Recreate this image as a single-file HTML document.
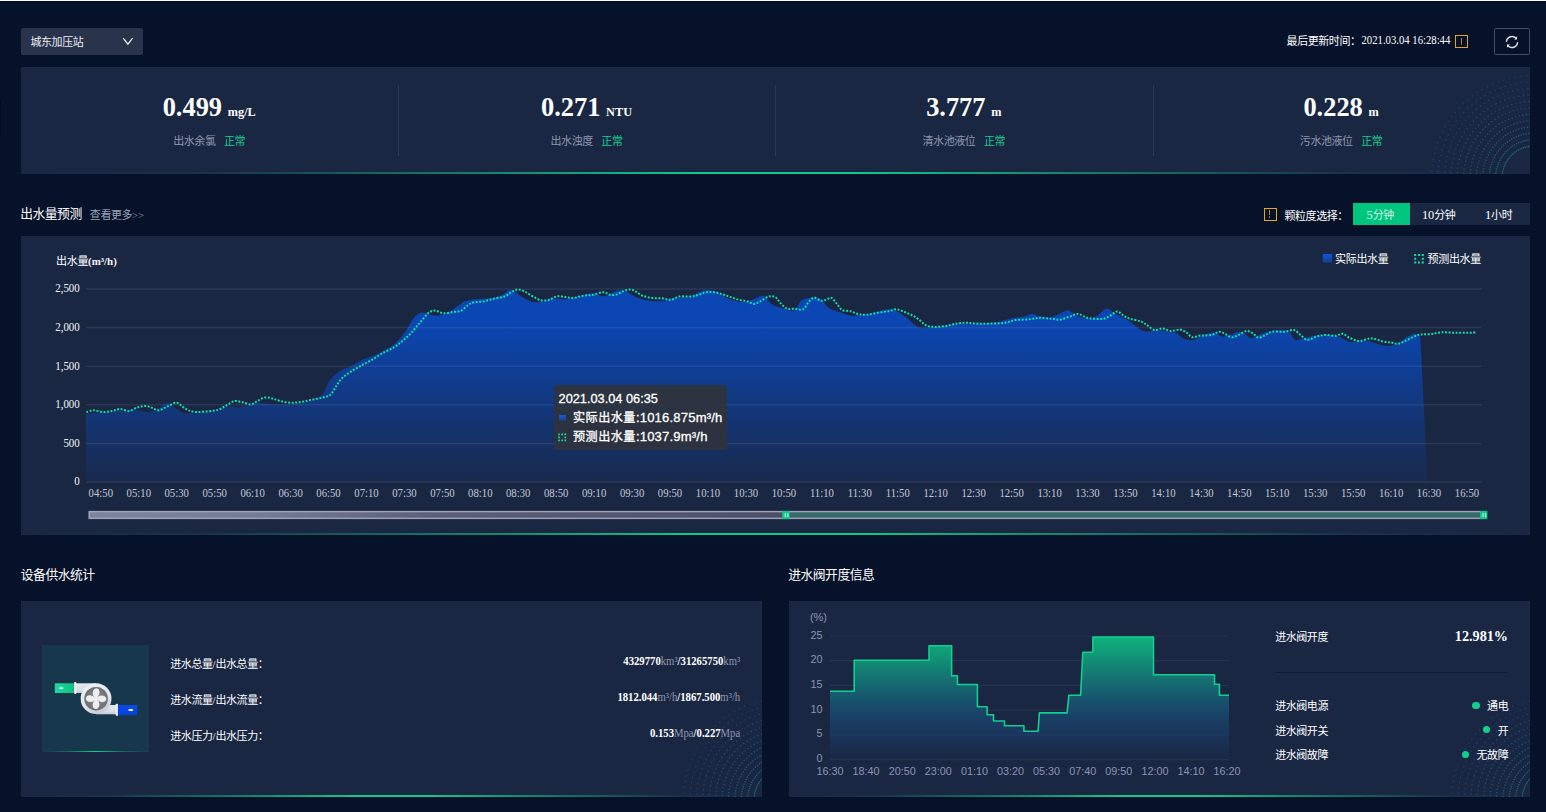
<!DOCTYPE html>
<html lang="zh"><head><meta charset="utf-8"><title>城东加压站</title>
<style>
*{box-sizing:border-box;margin:0;padding:0}
html,body{width:1546px;height:812px;overflow:hidden;background:#06112a}
body{position:relative;font-family:"Liberation Serif","Noto Sans CJK SC",serif;color:#fff;font-size:10.6px;font-weight:400}
.abs{position:absolute}
.ty{display:inline-block;transform:scaleY(1.1);transform-origin:50% 72%}
.c{font-family:"Liberation Serif","Noto Sans CJK SC",serif;font-size:11px;letter-spacing:-0.44px}
.t{position:absolute;white-space:nowrap;line-height:16px;height:16px}
.panel{position:absolute;background:#1a2743;overflow:hidden}
.panel::after{content:"";position:absolute;left:0;right:0;bottom:0;height:2px;background:linear-gradient(90deg,rgba(15,203,139,0) 0%,rgba(15,203,139,.07) 12%,rgba(15,203,139,.55) 30%,#0fcb8b 45%,#0fcb8b 55%,rgba(15,203,139,.55) 70%,rgba(15,203,139,.07) 88%,rgba(15,203,139,0) 100%)}
.deco{position:absolute;right:0;bottom:0}
.chart{position:absolute;left:0;top:0}
.chart text{font-family:"Liberation Serif","Noto Sans CJK SC",serif}
.ax{font-size:10.95px;fill:#f2f4f8}
.axx{font-size:10.7px;fill:#c3c8d4}
.lg{font-family:"Liberation Serif","Noto Sans CJK SC",serif !important;font-size:11px;letter-spacing:-0.3px;fill:#fff}
.va{font-family:"Liberation Sans","Noto Sans CJK SC",sans-serif !important;font-size:10.8px;fill:#8c94b3}
.sel{left:21px;top:28px;width:122px;height:26.5px;background:#29334c;border-radius:2px}
.warn{position:absolute;width:12.8px;height:12.8px;border:1.4px solid #e6a715}
.warn::before{content:"";position:absolute;left:4.3px;top:1.6px;width:1.2px;height:5px;background:#c9851f}
.warn::after{content:"";position:absolute;left:4.3px;top:7.2px;width:1.2px;height:1.6px;background:#9a7a2a}
.refresh{left:1494px;top:28px;width:36px;height:26.5px;border:1px solid #414b65;border-radius:1.5px}
.stat{position:absolute;top:0;height:107px;width:377px;text-align:center}
.stat .num{position:absolute;left:0;right:0;top:23px;font-weight:700;font-size:26.4px;line-height:34px;color:#fff;white-space:nowrap}
.stat .num small{font-size:12.3px;font-weight:700;margin-left:-0.9px}
.stat .lab{position:absolute;left:0;right:0;top:65.8px;line-height:16px;color:#9098ad;white-space:nowrap}
.stat .lab b{color:#12cf8e;font-weight:400;margin-left:8.6px}
.vsep{position:absolute;top:18px;width:1px;height:71px;background:#2d3851}
.h{font-family:"Liberation Serif","Noto Sans CJK SC",serif;font-size:12.8px;letter-spacing:-0.5px;color:#fff}
.more{font-size:11px;letter-spacing:-0.44px;color:#9aa2b6}
.seg{position:absolute;top:203.4px;height:21.2px;line-height:25.2px;overflow:hidden;text-align:center;background:#1a2743;color:#fff;white-space:nowrap;padding-right:3px}
.tip{left:554px;top:385px;width:173.3px;height:64.6px;background:rgba(46,51,60,.93);border-radius:3px;-webkit-text-stroke:0.3px #fff;font-family:"Liberation Sans","Noto Sans CJK SC",sans-serif;font-size:13.1px;color:#fff;white-space:nowrap}
.tip .ln{position:absolute;left:4.6px;height:18px;line-height:18px}
.tip .zh{font-size:12.1px;letter-spacing:0.48px}
.val{position:absolute;right:21.8px;line-height:16px;height:16px;white-space:nowrap;font-weight:700;font-size:10.7px;transform:scaleY(1.1);transform-origin:50% 72%}
.val i{font-style:normal;font-weight:400;color:#8e95ad}
.dotg{position:absolute;width:7.2px;height:7.2px;border-radius:50%;background:#12cf8e}
</style></head><body>
<div class="abs" style="left:0;top:0;width:1546px;height:1px;background:#fdfdfe"></div><div class="abs" style="left:0;top:1px;width:1546px;height:1px;background:#010520"></div><div class="abs" style="left:0;top:101px;width:1px;height:36px;background:#020a1d"></div>
<div class="abs sel"></div>
<div class="t c" style="left:30.5px;top:34.2px;color:#e9ecf3">城东加压站</div>
<svg class="abs" style="left:122px;top:36.9px" width="12" height="9" viewBox="0 0 12 9"><path d="M1.2,1.1 L5.9,7.2 L10.6,1.1" fill="none" stroke="#e9ecf3" stroke-width="1.25"/></svg>
<div class="t " style="left:1286.6px;top:33.2px;"><span class="c">最后更新时间：</span><span class="ty" style="font-size:10.7px;margin-left:1px;position:relative;top:-0.9px">2021.03.04 16:28:44</span></div>
<div class="warn" style="left:1455.4px;top:35px"></div>
<div class="abs refresh"><svg class="abs" style="left:8.8px;top:5.1px" width="16" height="16" viewBox="0 0 16 16"><g fill="none" stroke="#d9dce3" stroke-width="1.5"><path d="M2.50,7.81 A5.5,5.5 0 0 1 12.09,4.32"/><path d="M13.50,8.19 A5.5,5.5 0 0 1 3.91,11.68"/></g><path d="M12.94,5.59 L13.09,2.35 L10.28,5.47Z" fill="#f4f5f8"/><path d="M3.06,10.41 L2.91,13.65 L5.72,10.53Z" fill="#f4f5f8"/></svg></div>
<div class="panel" style="left:21px;top:67px;width:1509px;height:107px">
<svg class="deco" width="112" height="112" viewBox="0 0 112 112"><circle cx="116" cy="116" r="32.0" fill="none" stroke="rgb(31,150,150)" stroke-opacity="0.64" stroke-width="1.2" stroke-dasharray="1.2 0.63"/>
<circle cx="116" cy="116" r="38.4" fill="none" stroke="rgb(30,143,151)" stroke-opacity="0.63" stroke-width="1.2" stroke-dasharray="1.2 0.99"/>
<circle cx="116" cy="116" r="44.8" fill="none" stroke="rgb(30,137,152)" stroke-opacity="0.63" stroke-width="1.2" stroke-dasharray="1.2 1.36"/>
<circle cx="116" cy="116" r="51.2" fill="none" stroke="rgb(30,130,154)" stroke-opacity="0.62" stroke-width="1.2" stroke-dasharray="1.2 1.72"/>
<circle cx="116" cy="116" r="57.6" fill="none" stroke="rgb(30,124,155)" stroke-opacity="0.62" stroke-width="1.2" stroke-dasharray="1.2 2.09"/>
<circle cx="116" cy="116" r="64.0" fill="none" stroke="rgb(30,118,156)" stroke-opacity="0.61" stroke-width="1.2" stroke-dasharray="1.2 2.46"/>
<circle cx="116" cy="116" r="70.4" fill="none" stroke="rgb(30,111,158)" stroke-opacity="0.61" stroke-width="1.2" stroke-dasharray="1.2 2.82"/>
<circle cx="116" cy="116" r="76.8" fill="none" stroke="rgb(30,105,159)" stroke-opacity="0.60" stroke-width="1.2" stroke-dasharray="1.2 3.19"/>
<circle cx="116" cy="116" r="83.2" fill="none" stroke="rgb(30,99,160)" stroke-opacity="0.60" stroke-width="1.2" stroke-dasharray="1.2 3.55"/>
<circle cx="116" cy="116" r="89.6" fill="none" stroke="rgb(30,92,162)" stroke-opacity="0.59" stroke-width="1.2" stroke-dasharray="1.2 3.92"/>
<circle cx="116" cy="116" r="96.0" fill="none" stroke="rgb(30,86,163)" stroke-opacity="0.59" stroke-width="1.2" stroke-dasharray="1.2 4.28"/>
<circle cx="116" cy="116" r="102.4" fill="none" stroke="rgb(30,80,165)" stroke-opacity="0.58" stroke-width="1.2" stroke-dasharray="1.2 4.65"/></svg>
<div class="stat" style="left:-0.3px"><div class="num">0.499 <small>mg/L</small></div><div class="lab c">出水余氯<b>正常</b></div></div>
<div class="stat" style="left:377.0px"><div class="num">0.271 <small>NTU</small></div><div class="lab c">出水浊度<b>正常</b></div></div>
<div class="vsep" style="left:376.9px"></div>
<div class="stat" style="left:754.3px"><div class="num">3.777 <small>m</small></div><div class="lab c">清水池液位<b>正常</b></div></div>
<div class="vsep" style="left:754.2px"></div>
<div class="stat" style="left:1131.6px"><div class="num">0.228 <small>m</small></div><div class="lab c">污水池液位<b>正常</b></div></div>
<div class="vsep" style="left:1131.5px"></div>
</div>
<div class="t h" style="left:20.2px;top:206.3px;">出水量预测<span class="more" style="margin-left:8.2px;position:relative;top:0.8px">查看更多</span><span style="font-family:'Liberation Serif',serif;font-size:10.6px;letter-spacing:0;color:#8e96ac;position:relative;top:0.3px">&gt;&gt;</span></div>
<div class="warn" style="left:1263.9px;top:207.8px"></div>
<div class="t c" style="left:1284.5px;top:207.6px;">颗粒度选择：</div>
<div class="seg" style="left:1353px;width:57.2px;background:#00c57f;color:#d9f7ea"><span style="font-size:12.4px;line-height:10px">5</span><span class="c">分钟</span></div>
<div class="seg" style="left:1410.2px;width:59.9px"><span style="font-size:12.4px;line-height:10px">10</span><span class="c">分钟</span></div>
<div class="seg" style="left:1470.1px;width:59.9px"><span style="font-size:12.4px;line-height:10px">1</span><span class="c">小时</span></div>
<div class="panel" style="left:21px;top:236px;width:1509px;height:299.4px">
<svg class="chart" width="1509" height="299" viewBox="0 0 1509 299">
<defs><linearGradient id="ga" x1="0" y1="53" x2="0" y2="245.3" gradientUnits="userSpaceOnUse"><stop offset="0" stop-color="#0a48b9" stop-opacity="0.95"/><stop offset="0.17" stop-color="#0a48b9" stop-opacity="0.95"/><stop offset="1" stop-color="#0a48b9" stop-opacity="0.08"/></linearGradient>
<linearGradient id="gs" x1="0" y1="0" x2="1" y2="0"><stop offset="0" stop-color="#7d859c"/><stop offset="0.25" stop-color="#747b93"/><stop offset="0.5" stop-color="#5a5f79"/><stop offset="1" stop-color="#4b506a"/></linearGradient><linearGradient id="gl" x1="0" y1="0" x2="0" y2="1"><stop offset="0" stop-color="#0e55d8"/><stop offset="0.35" stop-color="#0f50c4"/><stop offset="1" stop-color="#163f86"/></linearGradient></defs>
<path d="M65.0,177.6 C67.8,177.4 76.3,176.8 82.0,176.2 C87.8,175.7 94.0,174.6 99.6,174.3 C105.3,174.0 111.4,174.0 115.9,174.3 C120.4,174.6 123.1,176.6 126.7,176.2 C130.3,175.9 134.4,173.7 137.6,172.2 C140.7,170.6 143.2,167.0 145.7,166.7 C148.2,166.5 149.8,169.1 152.5,170.8 C155.2,172.5 158.6,176.0 161.9,177.0 C165.3,178.1 167.4,177.5 172.8,177.0 C178.2,176.6 189.0,175.5 194.4,174.3 C199.9,173.2 201.2,170.8 205.3,170.3 C209.3,169.8 214.3,171.8 218.8,171.3 C223.3,170.9 228.3,168.2 232.4,167.6 C236.4,166.9 238.7,167.1 243.2,167.3 C247.7,167.5 254.0,168.6 259.5,168.6 C264.9,168.7 270.8,168.3 275.7,167.6 C280.7,166.8 285.7,165.1 289.3,164.0 C292.9,163.0 295.1,162.7 297.4,161.3 C299.6,160.0 301.0,158.6 302.8,155.9 C304.6,153.2 305.5,148.6 308.2,145.1 C310.9,141.5 315.4,137.3 319.1,134.8 C322.7,132.3 326.3,132.0 329.9,130.2 C333.5,128.4 337.1,125.6 340.7,123.9 C344.3,122.3 348.0,121.7 351.6,120.1 C355.2,118.6 358.8,116.7 362.4,114.7 C366.0,112.8 369.6,111.6 373.2,108.5 C376.9,105.4 380.9,100.6 384.1,96.3 C387.2,92.0 389.5,86.1 392.2,82.8 C394.9,79.5 397.5,77.2 400.3,76.5 C403.1,75.9 406.2,78.2 409.0,78.7 C411.8,79.2 414.0,80.0 417.1,79.5 C420.3,79.1 424.8,77.5 428.0,76.0 C431.1,74.5 433.4,72.4 436.1,70.6 C438.8,68.8 441.1,66.4 444.2,65.2 C447.4,63.9 450.5,63.8 455.1,63.3 C459.6,62.7 466.8,62.7 471.3,61.9 C475.8,61.1 479.4,59.6 482.1,58.4 C484.9,57.1 485.8,54.9 487.6,54.3 C489.4,53.8 490.7,54.0 493.0,55.1 C495.2,56.3 497.9,59.3 501.1,61.1 C504.3,62.9 508.3,65.3 511.9,66.0 C515.6,66.6 519.6,65.7 522.8,65.2 C525.9,64.6 527.3,62.8 530.9,62.4 C534.5,62.1 539.5,63.7 544.4,63.3 C549.4,62.8 556.2,60.8 560.7,59.7 C565.2,58.7 567.9,56.9 571.5,57.0 C575.2,57.1 579.2,60.3 582.4,60.3 C585.5,60.3 587.8,58.0 590.5,57.0 C593.2,56.0 595.9,54.5 598.6,54.3 C601.3,54.2 604.0,55.1 606.8,56.2 C609.5,57.3 611.7,59.7 614.9,61.1 C618.0,62.4 621.7,63.7 625.7,64.3 C629.8,65.0 634.7,65.6 639.3,65.2 C643.8,64.7 647.8,62.6 652.8,61.9 C657.8,61.2 665.0,62.0 669.1,61.1 C673.1,60.1 674.5,57.3 677.2,56.2 C679.9,55.1 682.2,54.3 685.3,54.3 C688.5,54.3 692.5,54.9 696.2,56.2 C699.8,57.6 702.9,60.8 707.0,62.4 C711.1,64.1 716.5,65.7 720.5,66.0 C724.6,66.2 727.8,64.8 731.4,63.8 C735.0,62.8 739.0,59.1 742.2,59.7 C745.4,60.4 747.5,65.9 750.3,67.9 C753.1,69.8 755.7,70.3 759.0,71.4 C762.3,72.5 767.1,74.5 769.8,74.6 C772.5,74.7 773.4,73.6 775.3,71.9 C777.1,70.2 778.4,66.0 780.7,64.3 C782.9,62.7 785.6,62.1 788.8,61.9 C792.0,61.7 796.5,61.6 799.6,63.3 C802.8,64.9 804.6,69.8 807.8,71.9 C810.9,74.0 815.0,74.7 818.6,76.0 C822.2,77.3 825.8,79.0 829.4,79.5 C833.0,80.0 836.2,79.4 840.3,79.0 C844.3,78.5 849.5,77.8 853.8,76.8 C858.1,75.9 862.4,73.6 866.0,73.3 C869.6,73.0 872.1,73.7 875.5,75.2 C878.9,76.7 883.2,79.8 886.3,82.2 C889.5,84.6 891.7,88.0 894.4,89.5 C897.2,91.1 898.1,91.6 902.6,91.7 C907.1,91.8 915.7,91.0 921.5,90.3 C927.4,89.7 931.9,88.1 937.8,87.6 C943.7,87.2 950.4,87.9 956.8,87.6 C963.1,87.4 970.3,87.1 975.7,86.3 C981.1,85.5 984.7,83.7 989.3,82.8 C993.8,81.8 999.2,81.4 1002.8,80.6 C1006.4,79.8 1008.2,77.9 1010.9,77.9 C1013.6,77.9 1015.9,80.0 1019.1,80.6 C1022.2,81.2 1026.3,82.0 1029.9,81.4 C1033.5,80.8 1037.8,77.9 1040.7,76.8 C1043.7,75.7 1044.8,74.1 1047.5,74.6 C1050.2,75.2 1053.6,78.7 1057.0,80.1 C1060.4,81.4 1064.7,82.8 1067.8,82.8 C1071.0,82.8 1073.0,81.7 1076.0,80.1 C1078.9,78.4 1082.5,73.2 1085.4,72.7 C1088.4,72.3 1090.6,75.8 1093.6,77.3 C1096.5,78.9 1100.5,80.9 1103.0,82.2 C1105.6,83.6 1106.7,83.8 1109.0,85.5 C1111.3,87.1 1114.4,90.5 1117.1,92.2 C1119.8,94.0 1122.1,95.4 1125.3,95.8 C1128.4,96.1 1132.5,94.1 1136.1,94.1 C1139.7,94.1 1143.8,95.3 1146.9,95.8 C1150.1,96.2 1152.3,95.6 1155.1,96.8 C1157.8,98.1 1160.2,101.9 1163.2,103.1 C1166.1,104.3 1169.5,104.6 1172.7,103.9 C1175.8,103.2 1178.8,100.2 1182.1,99.0 C1185.5,97.8 1189.8,96.6 1193.0,96.8 C1196.1,97.1 1198.4,100.0 1201.1,100.4 C1203.8,100.7 1206.5,99.8 1209.2,99.0 C1211.9,98.2 1214.9,96.0 1217.4,95.8 C1219.8,95.5 1222.1,96.6 1224.1,97.7 C1226.2,98.7 1227.3,102.0 1229.5,102.3 C1231.8,102.5 1234.7,100.1 1237.7,99.0 C1240.6,97.9 1243.3,96.6 1247.2,95.8 C1251.0,95.0 1257.1,94.0 1260.7,94.1 C1264.3,94.3 1266.6,95.2 1268.8,96.8 C1271.1,98.5 1272.0,103.0 1274.2,103.9 C1276.5,104.8 1279.2,102.9 1282.4,102.3 C1285.5,101.6 1289.1,100.4 1293.2,99.8 C1297.3,99.3 1302.7,98.9 1306.8,99.0 C1310.8,99.1 1314.0,99.2 1317.6,100.4 C1321.2,101.5 1324.8,105.0 1328.4,105.8 C1332.0,106.6 1336.1,105.1 1339.3,105.0 C1342.4,104.8 1344.2,104.4 1347.4,105.0 C1350.6,105.6 1354.6,107.7 1358.2,108.5 C1361.8,109.3 1365.7,110.2 1369.1,109.9 C1372.4,109.5 1375.6,108.2 1378.5,106.6 C1381.5,105.0 1384.0,101.9 1386.7,100.4 C1389.4,98.9 1392.8,97.9 1394.8,97.7 C1396.8,97.4 1398.2,98.8 1398.9,99.0 C1400.5,114.0 1402.0,164.0 1406.8,246.0 L65.0,246.0 Z" fill="url(#ga)"/>
<line x1="65.0" x2="1460.8" y1="53.0" y2="53.0" stroke="#a0aacd" stroke-opacity="0.13" stroke-width="1.5"/>
<line x1="65.0" x2="1460.8" y1="91.6" y2="91.6" stroke="#a0aacd" stroke-opacity="0.13" stroke-width="1.5"/>
<line x1="65.0" x2="1460.8" y1="130.2" y2="130.2" stroke="#a0aacd" stroke-opacity="0.13" stroke-width="1.5"/>
<line x1="65.0" x2="1460.8" y1="168.8" y2="168.8" stroke="#a0aacd" stroke-opacity="0.13" stroke-width="1.5"/>
<line x1="65.0" x2="1460.8" y1="207.4" y2="207.4" stroke="#a0aacd" stroke-opacity="0.13" stroke-width="1.5"/>
<line x1="65.0" x2="1460.8" y1="246.0" y2="246.0" stroke="#a0aacd" stroke-opacity="0.13" stroke-width="1.5"/>
<path d="M65.4,176.2 C66.6,175.9 69.8,174.4 72.5,174.3 C75.3,174.3 78.9,175.9 82.0,176.0 C85.2,176.0 88.7,175.4 91.5,174.9 C94.4,174.4 96.4,173.0 99.1,173.0 C101.8,173.0 105.0,175.1 107.8,174.9 C110.6,174.6 113.2,172.4 115.9,171.6 C118.6,170.8 121.5,170.0 124.0,170.0 C126.5,170.0 128.5,170.9 130.8,171.6 C133.0,172.3 135.1,174.5 137.6,174.3 C140.0,174.2 142.8,172.1 145.7,170.8 C148.6,169.5 152.5,166.7 155.2,166.7 C157.9,166.7 159.9,169.5 161.9,170.8 C164.0,172.1 165.1,173.5 167.4,174.3 C169.6,175.2 172.3,175.8 175.5,176.0 C178.6,176.1 182.7,175.8 186.3,175.4 C189.9,175.0 194.0,174.8 197.2,173.8 C200.3,172.8 202.6,170.9 205.3,169.4 C208.0,168.0 210.7,165.7 213.4,165.1 C216.1,164.6 218.8,165.7 221.5,166.2 C224.2,166.7 227.2,168.5 229.7,168.4 C232.1,168.2 234.2,166.2 236.4,165.1 C238.7,164.0 240.7,162.0 243.2,161.6 C245.7,161.1 248.6,161.8 251.3,162.4 C254.0,163.0 256.3,164.4 259.5,165.1 C262.6,165.8 266.7,166.6 270.3,166.7 C273.9,166.8 277.5,166.2 281.1,165.7 C284.7,165.1 288.4,164.2 292.0,163.5 C295.6,162.8 299.9,162.1 302.8,161.3 C305.7,160.5 307.5,160.4 309.6,158.6 C311.6,156.8 313.2,153.1 315.0,150.5 C316.8,147.9 317.9,145.4 320.4,142.9 C322.9,140.4 326.5,137.8 329.9,135.6 C333.3,133.3 337.1,131.4 340.7,129.4 C344.3,127.3 348.0,125.5 351.6,123.4 C355.2,121.3 358.8,118.7 362.4,116.6 C366.0,114.6 370.1,113.1 373.2,111.2 C376.4,109.3 378.7,107.2 381.4,105.0 C384.1,102.7 386.8,100.5 389.5,97.7 C392.2,94.9 395.1,91.1 397.6,88.2 C400.1,85.2 402.5,82.1 404.4,80.1 C406.3,78.0 407.3,76.9 409.0,76.0 C410.7,75.1 412.2,74.4 414.4,74.6 C416.7,74.9 419.6,77.1 422.5,77.3 C425.5,77.6 429.1,76.4 432.0,76.0 C435.0,75.5 437.7,75.8 440.2,74.6 C442.6,73.5 444.9,70.6 446.9,69.2 C449.0,67.9 449.6,67.2 452.3,66.5 C455.1,65.8 459.6,65.8 463.2,65.2 C466.8,64.5 470.6,63.2 474.0,62.4 C477.4,61.7 480.8,61.6 483.5,60.5 C486.2,59.5 488.0,57.4 490.3,56.2 C492.5,55.0 494.8,53.6 497.0,53.5 C499.3,53.4 501.3,54.5 503.8,55.7 C506.3,56.8 509.2,59.1 511.9,60.5 C514.7,62.0 517.4,63.8 520.1,64.3 C522.8,64.9 525.5,64.5 528.2,63.8 C530.9,63.1 533.6,60.7 536.3,60.3 C539.0,59.8 541.7,60.8 544.4,61.1 C547.2,61.4 549.6,62.1 552.6,61.9 C555.5,61.7 558.9,60.2 562.1,59.7 C565.2,59.2 568.2,59.5 571.5,58.9 C574.9,58.3 579.4,56.2 582.4,56.2 C585.3,56.2 586.9,58.6 589.1,58.9 C591.4,59.3 593.7,59.0 595.9,58.4 C598.2,57.7 600.4,55.9 602.7,55.1 C604.9,54.3 607.4,53.4 609.5,53.5 C611.5,53.6 612.9,54.6 614.9,55.7 C616.9,56.7 618.9,58.7 621.7,59.7 C624.4,60.8 627.8,61.5 631.1,61.9 C634.5,62.4 638.8,62.1 642.0,62.4 C645.1,62.8 647.4,64.1 650.1,63.8 C652.8,63.5 655.1,61.1 658.2,60.5 C661.4,60.0 665.9,60.8 669.1,60.5 C672.2,60.3 674.5,59.6 677.2,58.9 C679.9,58.2 682.6,56.7 685.3,56.2 C688.0,55.8 690.7,55.9 693.4,56.2 C696.2,56.6 698.9,57.6 701.6,58.4 C704.3,59.2 707.0,60.2 709.7,61.1 C712.4,62.0 715.1,63.1 717.8,63.8 C720.5,64.5 723.5,64.5 726.0,65.2 C728.4,65.8 730.5,67.9 732.7,67.9 C735.0,67.9 737.0,66.4 739.5,65.2 C742.0,63.9 745.1,61.2 747.6,60.5 C750.1,59.9 752.5,60.1 754.4,61.1 C756.3,62.1 757.1,64.6 759.0,66.5 C760.9,68.4 763.3,71.4 765.8,72.5 C768.3,73.5 771.2,72.6 773.9,72.7 C776.6,72.9 779.8,74.3 782.0,73.3 C784.3,72.2 785.6,68.4 787.4,66.5 C789.3,64.6 790.8,61.9 792.9,61.6 C794.9,61.3 797.6,64.3 799.6,64.6 C801.7,65.0 803.2,64.3 805.1,63.8 C806.9,63.3 808.7,61.2 810.5,61.9 C812.3,62.6 814.1,65.8 815.9,67.9 C817.7,69.9 819.0,72.9 821.3,74.1 C823.6,75.3 826.7,74.5 829.4,75.2 C832.1,75.9 834.9,77.6 837.6,78.2 C840.3,78.7 842.5,78.9 845.7,78.7 C848.8,78.5 852.9,77.4 856.5,76.8 C860.1,76.2 864.2,75.8 867.4,75.2 C870.5,74.6 872.8,73.1 875.5,73.3 C878.2,73.4 880.9,75.0 883.6,76.0 C886.3,77.0 889.3,78.2 891.7,79.5 C894.2,80.9 896.3,82.4 898.5,84.1 C900.8,85.8 902.8,88.4 905.3,89.5 C907.8,90.7 910.3,90.8 913.4,90.9 C916.6,91.0 920.6,90.6 924.2,90.1 C927.9,89.5 931.5,88.2 935.1,87.6 C938.7,87.1 942.3,86.8 945.9,86.8 C949.5,86.8 952.7,87.5 956.8,87.6 C960.8,87.8 965.8,87.8 970.3,87.6 C974.8,87.5 979.8,87.4 983.8,86.8 C987.9,86.2 990.6,84.7 994.7,84.1 C998.7,83.5 1004.2,83.7 1008.2,83.3 C1012.3,82.9 1015.4,81.8 1019.1,81.7 C1022.7,81.6 1026.5,82.4 1029.9,82.8 C1033.3,83.1 1036.2,83.9 1039.4,83.6 C1042.5,83.2 1045.9,81.5 1048.9,80.6 C1051.8,79.6 1054.3,77.8 1057.0,77.9 C1059.7,78.0 1062.4,80.6 1065.1,81.4 C1067.8,82.2 1070.3,82.5 1073.2,82.8 C1076.2,83.0 1080.0,83.3 1082.7,82.8 C1085.4,82.2 1087.2,80.7 1089.5,79.5 C1091.8,78.3 1094.0,75.4 1096.3,75.4 C1098.5,75.5 1100.9,78.8 1103.0,80.1 C1105.2,81.3 1106.2,81.9 1109.0,82.8 C1111.8,83.7 1116.9,84.3 1119.8,85.5 C1122.8,86.6 1124.4,88.1 1126.6,89.5 C1128.9,91.0 1130.9,93.6 1133.4,94.1 C1135.9,94.6 1138.8,92.4 1141.5,92.5 C1144.2,92.6 1146.7,94.8 1149.6,95.0 C1152.6,95.1 1156.4,93.3 1159.1,93.6 C1161.8,93.9 1163.9,95.6 1165.9,96.8 C1167.9,98.1 1169.0,100.7 1171.3,101.2 C1173.6,101.6 1176.3,99.9 1179.4,99.6 C1182.6,99.2 1187.1,99.6 1190.3,99.0 C1193.4,98.4 1195.9,95.9 1198.4,95.8 C1200.9,95.7 1203.1,97.6 1205.2,98.5 C1207.2,99.4 1208.6,101.1 1210.6,101.2 C1212.6,101.3 1214.9,100.1 1217.4,99.0 C1219.8,98.0 1223.0,95.2 1225.5,95.0 C1228.0,94.7 1230.2,96.5 1232.3,97.7 C1234.3,98.8 1235.6,101.5 1237.7,101.7 C1239.7,102.0 1242.2,100.0 1244.4,99.0 C1246.7,98.0 1248.1,96.3 1251.2,95.8 C1254.4,95.2 1259.8,96.0 1263.4,95.8 C1267.0,95.5 1270.2,93.6 1272.9,94.1 C1275.6,94.7 1277.4,97.4 1279.7,99.0 C1281.9,100.6 1283.7,103.7 1286.4,103.9 C1289.1,104.1 1293.0,101.2 1295.9,100.4 C1298.9,99.6 1300.9,99.1 1304.0,99.0 C1307.2,98.9 1311.9,100.1 1314.9,99.8 C1317.8,99.6 1319.4,97.3 1321.7,97.7 C1323.9,98.0 1325.7,100.5 1328.4,101.7 C1331.1,102.9 1334.3,104.9 1337.9,105.0 C1341.5,105.1 1346.3,102.2 1350.1,102.3 C1353.9,102.3 1357.5,104.5 1360.9,105.2 C1364.3,106.0 1367.7,106.2 1370.4,106.6 C1373.1,107.0 1374.7,108.0 1377.2,107.7 C1379.7,107.3 1382.6,105.7 1385.3,104.4 C1388.0,103.2 1391.0,101.4 1393.4,100.4 C1395.9,99.4 1397.5,98.8 1400.2,98.5 C1402.9,98.1 1406.3,98.6 1409.7,98.2 C1413.1,97.8 1416.5,96.5 1420.5,96.3 C1424.6,96.1 1429.6,96.8 1434.1,96.8 C1438.6,96.9 1444.0,96.9 1447.6,96.8 C1451.2,96.8 1454.4,96.4 1455.7,96.3" fill="none" stroke="#10e2ab" stroke-width="2" stroke-dasharray="1.9 1.6"/>
<text transform="translate(58.8 56.3) scale(1 1.1)" text-anchor="end" class="ax">2,500</text>
<text transform="translate(58.8 94.9) scale(1 1.1)" text-anchor="end" class="ax">2,000</text>
<text transform="translate(58.8 133.5) scale(1 1.1)" text-anchor="end" class="ax">1,500</text>
<text transform="translate(58.8 172.1) scale(1 1.1)" text-anchor="end" class="ax">1,000</text>
<text transform="translate(58.8 210.7) scale(1 1.1)" text-anchor="end" class="ax">500</text>
<text transform="translate(58.8 249.3) scale(1 1.1)" text-anchor="end" class="ax">0</text>
<text transform="translate(79.8 261.0) scale(1 1.12)" text-anchor="middle" class="axx">04:50</text>
<text transform="translate(117.8 261.0) scale(1 1.12)" text-anchor="middle" class="axx">05:10</text>
<text transform="translate(155.7 261.0) scale(1 1.12)" text-anchor="middle" class="axx">05:30</text>
<text transform="translate(193.7 261.0) scale(1 1.12)" text-anchor="middle" class="axx">05:50</text>
<text transform="translate(231.6 261.0) scale(1 1.12)" text-anchor="middle" class="axx">06:10</text>
<text transform="translate(269.6 261.0) scale(1 1.12)" text-anchor="middle" class="axx">06:30</text>
<text transform="translate(307.5 261.0) scale(1 1.12)" text-anchor="middle" class="axx">06:50</text>
<text transform="translate(345.5 261.0) scale(1 1.12)" text-anchor="middle" class="axx">07:10</text>
<text transform="translate(383.4 261.0) scale(1 1.12)" text-anchor="middle" class="axx">07:30</text>
<text transform="translate(421.4 261.0) scale(1 1.12)" text-anchor="middle" class="axx">07:50</text>
<text transform="translate(459.3 261.0) scale(1 1.12)" text-anchor="middle" class="axx">08:10</text>
<text transform="translate(497.2 261.0) scale(1 1.12)" text-anchor="middle" class="axx">08:30</text>
<text transform="translate(535.2 261.0) scale(1 1.12)" text-anchor="middle" class="axx">08:50</text>
<text transform="translate(573.1 261.0) scale(1 1.12)" text-anchor="middle" class="axx">09:10</text>
<text transform="translate(611.1 261.0) scale(1 1.12)" text-anchor="middle" class="axx">09:30</text>
<text transform="translate(649.0 261.0) scale(1 1.12)" text-anchor="middle" class="axx">09:50</text>
<text transform="translate(687.0 261.0) scale(1 1.12)" text-anchor="middle" class="axx">10:10</text>
<text transform="translate(725.0 261.0) scale(1 1.12)" text-anchor="middle" class="axx">10:30</text>
<text transform="translate(762.9 261.0) scale(1 1.12)" text-anchor="middle" class="axx">10:50</text>
<text transform="translate(800.9 261.0) scale(1 1.12)" text-anchor="middle" class="axx">11:10</text>
<text transform="translate(838.8 261.0) scale(1 1.12)" text-anchor="middle" class="axx">11:30</text>
<text transform="translate(876.8 261.0) scale(1 1.12)" text-anchor="middle" class="axx">11:50</text>
<text transform="translate(914.7 261.0) scale(1 1.12)" text-anchor="middle" class="axx">12:10</text>
<text transform="translate(952.6 261.0) scale(1 1.12)" text-anchor="middle" class="axx">12:30</text>
<text transform="translate(990.6 261.0) scale(1 1.12)" text-anchor="middle" class="axx">12:50</text>
<text transform="translate(1028.6 261.0) scale(1 1.12)" text-anchor="middle" class="axx">13:10</text>
<text transform="translate(1066.5 261.0) scale(1 1.12)" text-anchor="middle" class="axx">13:30</text>
<text transform="translate(1104.5 261.0) scale(1 1.12)" text-anchor="middle" class="axx">13:50</text>
<text transform="translate(1142.4 261.0) scale(1 1.12)" text-anchor="middle" class="axx">14:10</text>
<text transform="translate(1180.4 261.0) scale(1 1.12)" text-anchor="middle" class="axx">14:30</text>
<text transform="translate(1218.3 261.0) scale(1 1.12)" text-anchor="middle" class="axx">14:50</text>
<text transform="translate(1256.2 261.0) scale(1 1.12)" text-anchor="middle" class="axx">15:10</text>
<text transform="translate(1294.2 261.0) scale(1 1.12)" text-anchor="middle" class="axx">15:30</text>
<text transform="translate(1332.2 261.0) scale(1 1.12)" text-anchor="middle" class="axx">15:50</text>
<text transform="translate(1370.1 261.0) scale(1 1.12)" text-anchor="middle" class="axx">16:10</text>
<text transform="translate(1408.0 261.0) scale(1 1.12)" text-anchor="middle" class="axx">16:30</text>
<text transform="translate(1446.0 261.0) scale(1 1.12)" text-anchor="middle" class="axx">16:50</text>
<text x="35.0" y="29.1" class="ax"><tspan class="lg">出水量</tspan><tspan font-weight="700" font-size="10.9">(m³/h)</tspan></text>
<rect x="1301.8" y="18.0" width="9.2" height="8.6" fill="url(#gl)"/>
<text x="1314.0" y="26.5" class="lg">实际出水量</text>
<rect x="1394.2" y="19.1" width="7.6" height="7.3" fill="none" stroke="#10dfa6" stroke-width="2" stroke-dasharray="2 1.75" stroke-dashoffset="1"/>
<text x="1406.5" y="26.5" class="lg">预测出水量</text>
<rect x="67.7" y="275.0" width="697.3" height="8" fill="url(#gs)"/>
<rect x="765.0" y="275.0" width="697.5" height="8" fill="#376a6c"/>
<rect x="68.3" y="275.6" width="1393.6" height="6.8" fill="none" stroke="#a1a4b4" stroke-width="1.4"/>
<rect x="761.2" y="274.9" width="7.4" height="8.2" fill="#10c786"/>
<rect x="763.7" y="277.1" width="1.1" height="4" fill="#c9f8e3"/><rect x="766.3" y="277.1" width="1.1" height="4" fill="#c9f8e3"/>
<rect x="1459.0" y="274.9" width="7.4" height="8.2" fill="#10c786"/>
<rect x="1461.5" y="277.1" width="1.1" height="4" fill="#c9f8e3"/><rect x="1464.1" y="277.1" width="1.1" height="4" fill="#c9f8e3"/>
</svg>
</div>
<div class="abs tip">
<div class="ln" style="top:5px;font-size:12.75px">2021.03.04 06:35</div>
<div class="abs" style="left:4.6px;top:29.8px;width:7.4px;height:6.6px;background:linear-gradient(#1158e4,#1552c8 35%,rgba(24,66,150,.55) 100%)"></div>
<div class="ln" style="left:19px;top:23.8px"><span class="zh">实际出水量</span><span style="letter-spacing:0.17px">:1016.875m³/h</span></div>
<svg class="abs" style="left:3px;top:47px" width="12" height="12" viewBox="0 0 12 12"><rect x="2" y="2.3" width="6.3" height="6.1" fill="none" stroke="#10dfa6" stroke-width="1.7" stroke-dasharray="1.7 1.4" stroke-dashoffset="0.85"/></svg>
<div class="ln" style="left:19px;top:42.6px"><span class="zh">预测出水量</span><span style="letter-spacing:0.17px">:1037.9m³/h</span></div>
</div>
<div class="t h" style="left:20.8px;top:567.2px;">设备供水统计</div>
<div class="t h" style="left:788.2px;top:567.2px;">进水阀开度信息</div>
<div class="panel" style="left:21px;top:600.6px;width:741px;height:196.3px">
<svg class="deco" width="112" height="112" viewBox="0 0 112 112"><circle cx="136" cy="115" r="32.0" fill="none" stroke="rgb(31,150,150)" stroke-opacity="0.64" stroke-width="1.2" stroke-dasharray="1.2 0.63"/>
<circle cx="136" cy="115" r="38.4" fill="none" stroke="rgb(30,143,151)" stroke-opacity="0.63" stroke-width="1.2" stroke-dasharray="1.2 0.99"/>
<circle cx="136" cy="115" r="44.8" fill="none" stroke="rgb(30,137,152)" stroke-opacity="0.63" stroke-width="1.2" stroke-dasharray="1.2 1.36"/>
<circle cx="136" cy="115" r="51.2" fill="none" stroke="rgb(30,130,154)" stroke-opacity="0.62" stroke-width="1.2" stroke-dasharray="1.2 1.72"/>
<circle cx="136" cy="115" r="57.6" fill="none" stroke="rgb(30,124,155)" stroke-opacity="0.62" stroke-width="1.2" stroke-dasharray="1.2 2.09"/>
<circle cx="136" cy="115" r="64.0" fill="none" stroke="rgb(30,118,156)" stroke-opacity="0.61" stroke-width="1.2" stroke-dasharray="1.2 2.46"/>
<circle cx="136" cy="115" r="70.4" fill="none" stroke="rgb(30,111,158)" stroke-opacity="0.61" stroke-width="1.2" stroke-dasharray="1.2 2.82"/>
<circle cx="136" cy="115" r="76.8" fill="none" stroke="rgb(30,105,159)" stroke-opacity="0.60" stroke-width="1.2" stroke-dasharray="1.2 3.19"/>
<circle cx="136" cy="115" r="83.2" fill="none" stroke="rgb(30,99,160)" stroke-opacity="0.60" stroke-width="1.2" stroke-dasharray="1.2 3.55"/>
<circle cx="136" cy="115" r="89.6" fill="none" stroke="rgb(30,92,162)" stroke-opacity="0.59" stroke-width="1.2" stroke-dasharray="1.2 3.92"/>
<circle cx="136" cy="115" r="96.0" fill="none" stroke="rgb(30,86,163)" stroke-opacity="0.59" stroke-width="1.2" stroke-dasharray="1.2 4.28"/>
<circle cx="136" cy="115" r="102.4" fill="none" stroke="rgb(30,80,165)" stroke-opacity="0.58" stroke-width="1.2" stroke-dasharray="1.2 4.65"/></svg>
<div class="abs" style="left:21px;top:44.3px;width:107.3px;height:107.3px;background:#17384c"><svg class="pump" width="107" height="107" viewBox="0 0 107 107">
<defs>
<linearGradient id="pg" x1="0" y1="0" x2="1" y2="0"><stop offset="0" stop-color="#16dfa0"/><stop offset="1" stop-color="#10bf82"/></linearGradient>
<linearGradient id="pb" x1="0" y1="0" x2="0" y2="1"><stop offset="0" stop-color="#0a4cec"/><stop offset="1" stop-color="#0840dc"/></linearGradient>
<linearGradient id="pw" x1="0" y1="0" x2="0" y2="1"><stop offset="0" stop-color="#e4e8ee"/><stop offset="0.7" stop-color="#d9dee6"/><stop offset="1" stop-color="#c3c9d3"/></linearGradient>
<linearGradient id="pr" x1="0" y1="0" x2="0.4" y2="1"><stop offset="0" stop-color="#eef1f5"/><stop offset="0.7" stop-color="#e2e6ec"/><stop offset="1" stop-color="#c9ced8"/></linearGradient>
<radialGradient id="pd" cx="0.5" cy="0.5" r="0.5"><stop offset="0" stop-color="#8d8d8f"/><stop offset="1" stop-color="#6e6f72"/></radialGradient>
<radialGradient id="pbl" cx="0.5" cy="0.5" r="0.6"><stop offset="0" stop-color="#ffffff"/><stop offset="1" stop-color="#d9dbe0"/></radialGradient>
</defs>
<rect x="12.9" y="38.3" width="19.4" height="9.7" fill="url(#pg)"/>
<rect x="17.3" y="42.2" width="3.9" height="1.8" rx="0.6" fill="#eafff7"/>
<path d="M34,38.3 H54 V48 H34 Z" fill="url(#pw)"/>
<path d="M54,60 H74 V69.3 H54 Z" fill="url(#pw)"/>
<rect x="32.1" y="36.9" width="2.3" height="12.1" rx="0.9" fill="#eceff3"/>
<rect x="73.7" y="58.7" width="2.3" height="12.1" rx="0.9" fill="#eceff3"/>
<rect x="75.9" y="60.1" width="19.2" height="10" fill="url(#pb)"/>
<rect x="86.6" y="64.1" width="4.3" height="2" rx="0.6" fill="#f2f5ff"/>
<circle cx="54.07" cy="53.7" r="15.4" fill="url(#pr)"/>
<circle cx="54.07" cy="53.7" r="11.8" fill="url(#pd)"/>
<g fill="#eceef1"><path d="M0,0 C-4.6,-2.2 -5.2,-8.8 -1.0,-10.3 C3.6,-10.6 4.4,-4.6 0,0Z" transform="translate(54.07,53.70) rotate(5)"/><path d="M0,0 C-4.6,-2.2 -5.2,-8.8 -1.0,-10.3 C3.6,-10.6 4.4,-4.6 0,0Z" transform="translate(54.07,53.70) rotate(95)"/><path d="M0,0 C-4.6,-2.2 -5.2,-8.8 -1.0,-10.3 C3.6,-10.6 4.4,-4.6 0,0Z" transform="translate(54.07,53.70) rotate(185)"/><path d="M0,0 C-4.6,-2.2 -5.2,-8.8 -1.0,-10.3 C3.6,-10.6 4.4,-4.6 0,0Z" transform="translate(54.07,53.70) rotate(275)"/></g>
<circle cx="54.07" cy="53.7" r="1.2" fill="#ffffff"/>
</svg><div class="abs" style="left:0;right:0;bottom:0;height:1.6px;background:linear-gradient(90deg,rgba(16,200,134,0),rgba(16,200,134,.35) 25%,#12d08c 50%,rgba(16,200,134,.35) 75%,rgba(16,200,134,0))"></div></div>
<div class="t c" style="left:149.3px;top:55.9px;">进水总量<span style="font-family:'Liberation Serif',serif;font-size:10.6px;letter-spacing:0">/</span>出水总量：</div>
<div class="t c" style="left:149.3px;top:91.4px;">进水流量<span style="font-family:'Liberation Serif',serif;font-size:10.6px;letter-spacing:0">/</span>出水流量：</div>
<div class="t c" style="left:149.3px;top:127.2px;">进水压力<span style="font-family:'Liberation Serif',serif;font-size:10.6px;letter-spacing:0">/</span>出水压力：</div>
<div class="val" style="top:52.6px">4329770<i>km³</i>/31265750<i>km³</i></div>
<div class="val" style="top:88.2px">1812.044<i>m³/h</i>/1867.500<i>m³/h</i></div>
<div class="val" style="top:124.0px">0.153<i>Mpa</i>/0.227<i>Mpa</i></div>
</div>
<div class="panel" style="left:789px;top:600.6px;width:741px;height:196.3px">
<svg class="deco" width="112" height="112" viewBox="0 0 112 112"><circle cx="136" cy="115" r="32.0" fill="none" stroke="rgb(31,150,150)" stroke-opacity="0.64" stroke-width="1.2" stroke-dasharray="1.2 0.63"/>
<circle cx="136" cy="115" r="38.4" fill="none" stroke="rgb(30,143,151)" stroke-opacity="0.63" stroke-width="1.2" stroke-dasharray="1.2 0.99"/>
<circle cx="136" cy="115" r="44.8" fill="none" stroke="rgb(30,137,152)" stroke-opacity="0.63" stroke-width="1.2" stroke-dasharray="1.2 1.36"/>
<circle cx="136" cy="115" r="51.2" fill="none" stroke="rgb(30,130,154)" stroke-opacity="0.62" stroke-width="1.2" stroke-dasharray="1.2 1.72"/>
<circle cx="136" cy="115" r="57.6" fill="none" stroke="rgb(30,124,155)" stroke-opacity="0.62" stroke-width="1.2" stroke-dasharray="1.2 2.09"/>
<circle cx="136" cy="115" r="64.0" fill="none" stroke="rgb(30,118,156)" stroke-opacity="0.61" stroke-width="1.2" stroke-dasharray="1.2 2.46"/>
<circle cx="136" cy="115" r="70.4" fill="none" stroke="rgb(30,111,158)" stroke-opacity="0.61" stroke-width="1.2" stroke-dasharray="1.2 2.82"/>
<circle cx="136" cy="115" r="76.8" fill="none" stroke="rgb(30,105,159)" stroke-opacity="0.60" stroke-width="1.2" stroke-dasharray="1.2 3.19"/>
<circle cx="136" cy="115" r="83.2" fill="none" stroke="rgb(30,99,160)" stroke-opacity="0.60" stroke-width="1.2" stroke-dasharray="1.2 3.55"/>
<circle cx="136" cy="115" r="89.6" fill="none" stroke="rgb(30,92,162)" stroke-opacity="0.59" stroke-width="1.2" stroke-dasharray="1.2 3.92"/>
<circle cx="136" cy="115" r="96.0" fill="none" stroke="rgb(30,86,163)" stroke-opacity="0.59" stroke-width="1.2" stroke-dasharray="1.2 4.28"/>
<circle cx="136" cy="115" r="102.4" fill="none" stroke="rgb(30,80,165)" stroke-opacity="0.58" stroke-width="1.2" stroke-dasharray="1.2 4.65"/></svg>
<svg class="chart" width="741" height="196" viewBox="0 0 741 196">
<defs><linearGradient id="gv" x1="0" y1="35.0" x2="0" y2="158.0" gradientUnits="userSpaceOnUse"><stop offset="0" stop-color="#0fb47c"/><stop offset="0.55" stop-color="#17506e" stop-opacity="0.95"/><stop offset="0.8" stop-color="#1b4070" stop-opacity="0.55"/><stop offset="1" stop-color="#1b3a6a" stop-opacity="0.08"/></linearGradient></defs>
<line x1="41.0" x2="440.0" y1="158.6" y2="158.6" stroke="#27324c" stroke-width="1.2"/>
<line x1="41.0" x2="440.0" y1="133.9" y2="133.9" stroke="#27324c" stroke-width="1.2"/>
<line x1="41.0" x2="440.0" y1="109.2" y2="109.2" stroke="#27324c" stroke-width="1.2"/>
<line x1="41.0" x2="440.0" y1="84.4" y2="84.4" stroke="#27324c" stroke-width="1.2"/>
<line x1="41.0" x2="440.0" y1="59.7" y2="59.7" stroke="#27324c" stroke-width="1.2"/>
<line x1="41.0" x2="440.0" y1="35.0" y2="35.0" stroke="#27324c" stroke-width="1.2"/>
<path d="M41.0,90.3 L65.2,90.3 L65.2,59.3 L140.0,59.3 L140.0,44.8 L162.6,44.8 L162.6,74.8 L168.4,74.8 L168.4,83.5 L188.4,83.5 L188.4,105.8 L198.1,105.8 L198.1,113.8 L204.5,113.8 L204.5,120.0 L215.5,120.0 L215.5,124.8 L234.9,124.8 L234.9,130.3 L249.1,130.3 L250.4,111.9 L278.1,111.9 L279.9,94.2 L291.6,94.2 L293.8,51.3 L303.9,51.3 L303.9,36.1 L364.5,36.1 L364.5,73.8 L425.5,73.8 L425.5,83.2 L430.4,83.2 L430.4,94.2 L440.0,94.2 L440.0,158.0 L41.0,158.0 Z" fill="url(#gv)"/>
<path d="M41.0,90.3 L65.2,90.3 L65.2,59.3 L140.0,59.3 L140.0,44.8 L162.6,44.8 L162.6,74.8 L168.4,74.8 L168.4,83.5 L188.4,83.5 L188.4,105.8 L198.1,105.8 L198.1,113.8 L204.5,113.8 L204.5,120.0 L215.5,120.0 L215.5,124.8 L234.9,124.8 L234.9,130.3 L249.1,130.3 L250.4,111.9 L278.1,111.9 L279.9,94.2 L291.6,94.2 L293.8,51.3 L303.9,51.3 L303.9,36.1 L364.5,36.1 L364.5,73.8 L425.5,73.8 L425.5,83.2 L430.4,83.2 L430.4,94.2 L440.0,94.2" fill="none" stroke="#12cf8e" stroke-width="1.6" stroke-linejoin="round"/>
<text x="33.6" y="161.1" text-anchor="end" class="va">0</text>
<text x="33.6" y="136.4" text-anchor="end" class="va">5</text>
<text x="33.6" y="111.7" text-anchor="end" class="va">10</text>
<text x="33.6" y="87.0" text-anchor="end" class="va">15</text>
<text x="33.6" y="62.3" text-anchor="end" class="va">20</text>
<text x="33.6" y="37.6" text-anchor="end" class="va">25</text>
<text x="38.0" y="19.6" text-anchor="end" class="va" style="font-size:11px">(%)</text>
<text x="41.0" y="174.0" text-anchor="middle" class="va">16:30</text>
<text x="77.1" y="174.0" text-anchor="middle" class="va">18:40</text>
<text x="113.2" y="174.0" text-anchor="middle" class="va">20:50</text>
<text x="149.3" y="174.0" text-anchor="middle" class="va">23:00</text>
<text x="185.4" y="174.0" text-anchor="middle" class="va">01:10</text>
<text x="221.5" y="174.0" text-anchor="middle" class="va">03:20</text>
<text x="257.6" y="174.0" text-anchor="middle" class="va">05:30</text>
<text x="293.7" y="174.0" text-anchor="middle" class="va">07:40</text>
<text x="329.8" y="174.0" text-anchor="middle" class="va">09:50</text>
<text x="365.9" y="174.0" text-anchor="middle" class="va">12:00</text>
<text x="402.0" y="174.0" text-anchor="middle" class="va">14:10</text>
<text x="438.1" y="174.0" text-anchor="middle" class="va">16:20</text>
</svg>
<div class="t c" style="left:486.2px;top:28.9px;">进水阀开度</div>
<div class="t " style="right:22.0px;top:27.6px;font-weight:700;font-size:14.2px;transform:scaleY(1.07);transform-origin:50% 72%">12.981%</div>
<div class="abs" style="left:486.2px;top:71.0px;width:233px;height:1.2px;background:#131c36"></div>
<div class="t c" style="left:486.2px;top:97.7px;">进水阀电源</div>
<div class="t c" style="right:21.8px;top:97.7px;">通电</div>
<div class="dotg" style="left:683.4px;top:101.3px"></div>
<div class="t c" style="left:486.2px;top:122.1px;">进水阀开关</div>
<div class="t c" style="right:21.8px;top:122.1px;">开</div>
<div class="dotg" style="left:694.0px;top:125.7px"></div>
<div class="t c" style="left:486.2px;top:146.7px;">进水阀故障</div>
<div class="t c" style="right:21.8px;top:146.7px;">无故障</div>
<div class="dotg" style="left:672.7px;top:150.3px"></div>
</div>
</body></html>
